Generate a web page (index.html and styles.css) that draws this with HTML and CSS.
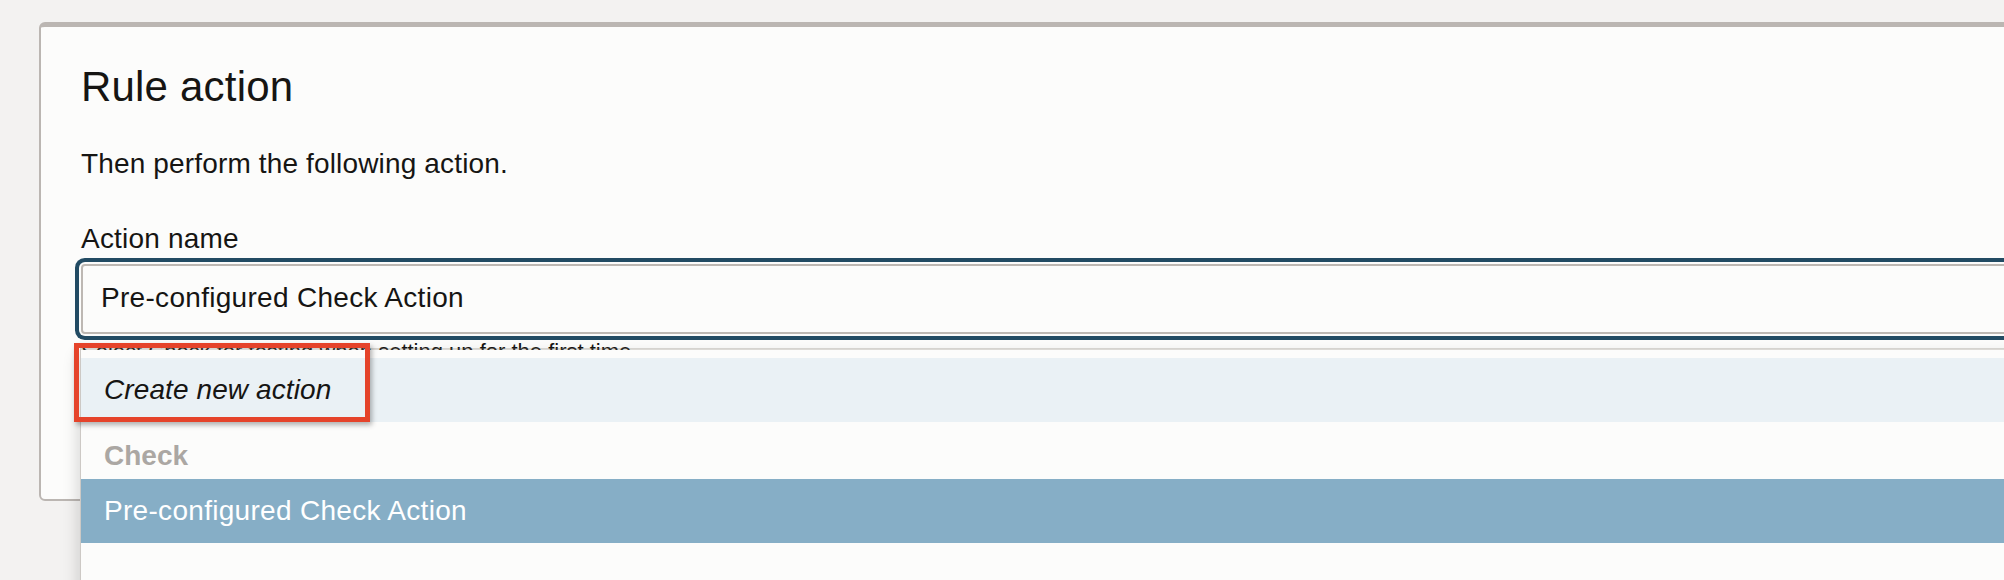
FILE: index.html
```html
<!DOCTYPE html>
<html lang="en">
<head>
<meta charset="utf-8">
<title>Rule action</title>
<link rel="stylesheet" href="styles.css">
</head>
<body>
<main class="page">
  <section class="card">
    <h1 class="card-title">Rule action</h1>
    <p class="card-text">Then perform the following action.</p>
    <div class="field">
      <label class="field-label" for="action-name">Action name</label>
      <div class="combo">
        <input id="action-name" class="combo-input" type="text" value="Pre-configured Check Action">
        <ul class="listbox">
          <li class="option option-create"><span class="highlight"></span>Create new action</li>
          <li class="group-label">Check</li>
          <li class="option option-selected">Pre-configured Check Action</li>
        </ul>
      </div>
      <p class="field-help">Select Check for testing when setting up for the first time.</p>
    </div>
  </section>
</main>
</body>
</html>
```

FILE: styles.css
```css
* { box-sizing: border-box; }

html, body {
  margin: 0;
  height: 580px;
  overflow: hidden;
  background: #f3f2f1;
}

body {
  font-family: "Liberation Sans", Arial, sans-serif;
  color: #161513;
}

.page {
  padding: 22px 0 0 39px;
}

.card {
  width: 2200px;
  background: #fcfcfb;
  border: 2px solid #bbb6b2;
  border-top-width: 5px;
  border-radius: 6px;
  padding: 36px 40px 133px;
}

.card-title {
  margin: 0;
  font-size: 42px;
  line-height: 48px;
  font-weight: 400;
  letter-spacing: 0.2px;
}

.card-text {
  margin: 37px 0 0;
  font-size: 28px;
  line-height: 32px;
  letter-spacing: 0.15px;
}

.field {
  margin-top: 43px;
}

.field-label {
  display: block;
  font-size: 28px;
  line-height: 32px;
  margin-bottom: 9px;
  letter-spacing: 0.2px;
}

.combo {
  position: relative;
}

.combo-input {
  display: block;
  width: 100%;
  height: 70px;
  border: 2px solid #bdb8b3;
  border-radius: 4px;
  background: #fcfcfb;
  padding: 0 18px 2px;
  font: 28px/32px "Liberation Sans", Arial, sans-serif;
  letter-spacing: 0.3px;
  color: #161513;
  box-shadow: 0 0 0 2px #fcfcfb, 0 0 0 6px #224b63;
  outline: none;
}

.field-help {
  margin: 4px 0 0;
  font-size: 22px;
  line-height: 28px;
  color: #161513;
}

.listbox {
  position: absolute;
  top: calc(100% + 14px);
  left: -1px;
  right: 0;
  height: 400px;
  margin: 0;
  padding: 8px 0 0;
  list-style: none;
  background: #fcfcfb;
  background-clip: padding-box;
  border-top: 2px solid rgba(120, 110, 100, 0.25);
  border-left: 1px solid #cdc9c5;
  box-shadow: -3px 6px 14px rgba(0, 0, 0, 0.14);
  z-index: 2;
}

.option,
.group-label {
  font-size: 28px;
  line-height: 32px;
  padding: 16px 23px;
  letter-spacing: 0.3px;
}

.option-create {
  position: relative;
  background: #eaf1f5;
  font-style: italic;
  letter-spacing: 0.1px;
}

.group-label {
  padding: 18px 23px 7px;
  color: #aba7a3;
  font-weight: 700;
  letter-spacing: 0;
}

.option-selected {
  background: #86aec6;
  color: #ffffff;
}

.highlight {
  position: absolute;
  left: -7px;
  top: -15px;
  width: 296px;
  height: 79px;
  border: 5px solid #e5432a;
  box-shadow: 2px 3px 5px rgba(0, 0, 0, 0.3);
}
```
